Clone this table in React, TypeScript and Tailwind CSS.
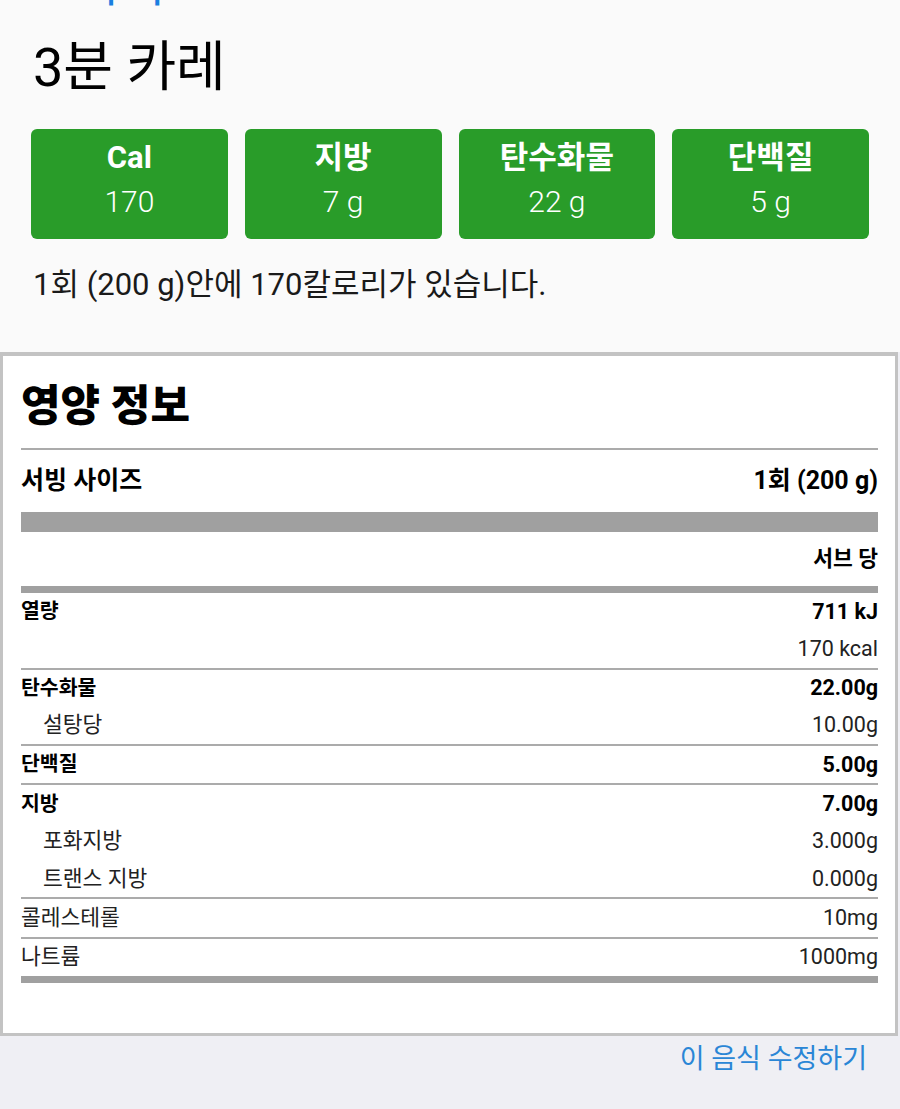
const macros = [
  { label: "Cal", value: "170" },
  { label: "지방", value: "7 g" },
  { label: "탄수화물", value: "22 g" },
  { label: "단백질", value: "5 g" },
];

type Row = { name: string; value: string; bold?: boolean; sub?: boolean; lineAfter?: boolean };

const rows: Row[] = [
  { name: "열량", value: "711 kJ", bold: true },
  { name: "", value: "170 kcal", lineAfter: true },
  { name: "탄수화물", value: "22.00g", bold: true },
  { name: "설탕당", value: "10.00g", sub: true, lineAfter: true },
  { name: "단백질", value: "5.00g", bold: true, lineAfter: true },
  { name: "지방", value: "7.00g", bold: true },
  { name: "포화지방", value: "3.000g", sub: true },
  { name: "트랜스 지방", value: "0.000g", sub: true, lineAfter: true },
  { name: "콜레스테롤", value: "10mg", lineAfter: true },
  { name: "나트륨", value: "1000mg" },
];

function NutrientRow({ row }: { row: Row }) {
  return (
    <>
      <div className="flex h-[37.3px] items-center justify-between text-black">
        <span
          className={
            row.bold
              ? "text-[20.5px] font-bold"
              : row.sub
                ? "pl-[22px] text-[21.5px] text-[#222]"
                : "text-[21.5px] text-[#222]"
          }
        >
          {row.name}
        </span>
        <span className={row.bold ? "text-[21.5px] font-bold" : "text-[21.5px] text-[#222]"}>{row.value}</span>
      </div>
      {row.lineAfter && <div className="h-[2px] bg-[#ababab]" />}
    </>
  );
}

export default function App() {
  return (
    <div className="flex min-h-[1109px] w-[900px] flex-col bg-[#efeff4] font-['Roboto','Noto_Sans_CJK_KR',sans-serif]">
      <div className="flex flex-col bg-[#fafafa] px-[31px] pb-[49px]">
        <div className="-mt-[38px] h-[46px] pl-[2px] text-[48px] leading-[46px] text-[#1a7fe0]">브라이트</div>
        <h1 className="mt-[30px] pl-[2px] text-[54px] leading-[60px] text-black">3분 카레</h1>

        <div className="mt-[31px] grid grid-cols-4 gap-[17px]">
          {macros.map((m) => (
            <div key={m.label} className="flex h-[110px] flex-col items-center rounded-[6px] bg-[#299c29] pt-[10px] text-white">
              <span className="text-[31px] font-bold leading-[38px]">{m.label}</span>
              <span className="mt-[4px] text-[30px] font-light leading-[42px]">{m.value}</span>
            </div>
          ))}
        </div>

        <p className="mt-[28px] pl-[2px] text-[31px] leading-[36px] text-[#1a1a1a]">1회 (200 g)안에 170칼로리가 있습니다.</p>
      </div>

      <div className="mr-[2px] border-[3px] border-t-[4px] border-[#c3c3c3] bg-white pb-[50px] pl-[18px] pr-[17px] pt-[26px]">
        <h2 className="text-[43px] font-black leading-[48px] text-black">영양 정보</h2>
        <div className="mt-[18px] h-[2px] bg-[#ababab]" />

        <div className="flex h-[62px] items-center justify-between text-[25px] font-bold text-black">
          <span>서빙 사이즈</span>
          <span>1회 (200 g)</span>
        </div>
        <div className="h-[20px] bg-[#a0a0a0]" />

        <div className="flex h-[54px] items-center justify-end text-[21.5px] font-bold text-black">서브 당</div>
        <div className="h-[7px] bg-[#a0a0a0]" />

        {rows.map((r, i) => (
          <NutrientRow key={i} row={r} />
        ))}
        <div className="h-[7px] bg-[#a0a0a0]" />
      </div>

      <div className="flex justify-end pr-[33px] pt-[5px]">
        <button className="text-[27px] leading-[36px] text-[#2a86d6]">이 음식 수정하기</button>
      </div>
    </div>
  );
}
